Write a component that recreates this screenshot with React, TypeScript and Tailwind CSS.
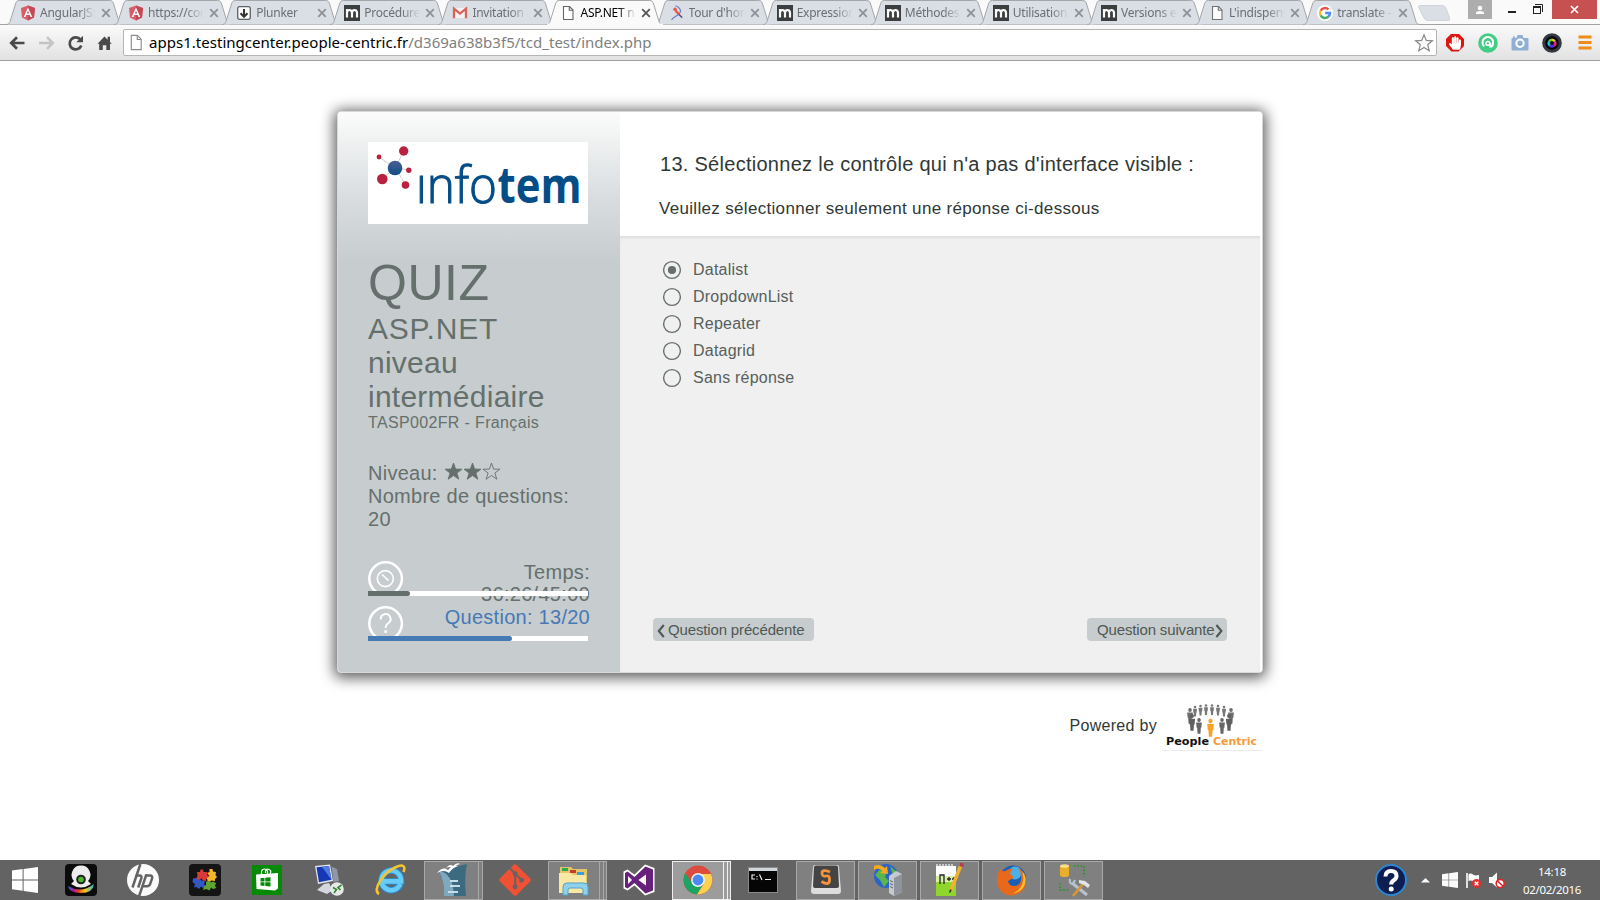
import React from "react";
import { FaHandPaper, FaGitAlt } from "react-icons/fa";

const SEGOE = "font-['Noto_Sans',sans-serif]";

/* ---------- browser chrome ---------- */

function AngularIcon() {
  return (
    <svg viewBox="0 0 16 16" className="h-4 w-4">
      <path d="M8 0.5 15 3 14 12.4 8 15.6 2 12.4 1 3Z" fill="#d9505a" />
      <path d="M8 0.5 15 3 14 12.4 8 15.6Z" fill="#c03a48" />
      <path d="M8 2.4 12.3 12H10.5L9.7 9.9H6.3L5.5 12H3.7ZM8 5.6 6.9 8.4H9.1Z" fill="#fff" />
    </svg>
  );
}
function PlunkIcon() {
  return (
    <svg viewBox="0 0 16 16" className="h-4 w-4">
      <rect x="1.7" y="1.7" width="12.6" height="12.6" rx="2" fill="#fff" stroke="#555" strokeWidth="1.3" />
      <path d="M8 4V11.5M4.5 8.2 8 11.8 11.5 8.2" stroke="#222" strokeWidth="2" fill="none" />
    </svg>
  );
}
function MIcon() {
  return (
    <svg viewBox="0 0 16 16" className="h-4 w-4">
      <rect width="16" height="16" fill="#2c2c2c" />
      <path d="M3 12.5V4M3 12.5V7.5Q3.3 5 5.4 5T8 7.5V12.5M8 7.5Q8.4 5 10.5 5T13 7.5V12.5" stroke="#fff" strokeWidth="2.2" fill="none" />
    </svg>
  );
}
function GmailIcon() {
  return (
    <svg viewBox="0 0 16 16" className="h-4 w-4">
      <rect x="2" y="3" width="12" height="10" fill="#f4f4f4" />
      <path d="M2 13.2V3.6L8 8.6 14 3.6V13.2" fill="none" stroke="#d9564a" strokeWidth="2.3" />
    </svg>
  );
}
function PageIcon() {
  return (
    <svg viewBox="0 0 16 16" className="h-4 w-4">
      <path d="M3.5 1.5H9.5L13 5V14.5H3.5Z" fill="#fff" stroke="#666" strokeWidth="1.1" />
      <path d="M9.3 1.5V5.3H13" fill="none" stroke="#666" strokeWidth="1.1" />
    </svg>
  );
}
function TourIcon() {
  return (
    <svg viewBox="0 0 16 16" className="h-4 w-4">
      <path d="M6.5 0.8C11 2 13 6 10 9S4.5 11.5 2.5 15" fill="none" stroke="#5a68b8" strokeWidth="1.1" />
      <path d="M9 8.5 13.2 12.6" stroke="#3f4a90" strokeWidth="1.5" />
      <circle cx="6" cy="4.2" r="1.7" fill="#e8473e" />
      <path d="M6.5 5.5 10 9.5" stroke="#e8473e" strokeWidth="2.4" />
    </svg>
  );
}
function GoogleIcon() {
  return (
    <svg viewBox="0 0 16 16" className="h-4 w-4">
      <circle cx="8" cy="8" r="8" fill="#fff" />
      <g fill="none" strokeWidth="2.4">
        <path d="M11.5 4.4A5 5 0 0 0 3.6 5.7" stroke="#ea4335" />
        <path d="M3.6 5.7A5 5 0 0 0 3.6 10.4" stroke="#fbbc05" />
        <path d="M3.6 10.4A5 5 0 0 0 11.4 11.7" stroke="#34a853" />
        <path d="M11.4 11.7A5 5 0 0 0 13 8H8.2" stroke="#4285f4" />
      </g>
    </svg>
  );
}

type TabInfo = { title: string; icon: React.ReactNode; active?: boolean };
const TABS: TabInfo[] = [
  { title: "AngularJS:", icon: <AngularIcon /> },
  { title: "https://cod", icon: <AngularIcon /> },
  { title: "Plunker", icon: <PlunkIcon /> },
  { title: "Procédure", icon: <MIcon /> },
  { title: "Invitation à", icon: <GmailIcon /> },
  { title: "ASP.NET ni", icon: <PageIcon />, active: true },
  { title: "Tour d'hori", icon: <TourIcon /> },
  { title: "Expression", icon: <MIcon /> },
  { title: "Méthodes", icon: <MIcon /> },
  { title: "Utilisation", icon: <MIcon /> },
  { title: "Versions et", icon: <MIcon /> },
  { title: "L'indispens", icon: <PageIcon /> },
  { title: "translate - ", icon: <GoogleIcon /> },
];

function Tab({ title, icon, active }: TabInfo) {
  return (
    <div className={active ? "relative z-10 h-[25px] w-[108.1px] shrink-0" : "relative h-[25px] w-[108.1px] shrink-0"}>
      <svg viewBox="0 0 120 25" className="absolute top-0 left-0 h-[25px] w-[120px]">
        <path
          d="M0 24.5C3 24.5 3.5 23 4 21.5L9.5 4C10.3 1.5 11 0.5 13.5 0.5H103.5C106 0.5 106.8 1.5 107.6 4L113 21.5C113.6 23 114 24.5 117 24.5"
          fill={active ? "#fafafa" : "#dadfe6"}
          stroke="#a4a6a9"
        />
        {active && <rect x="1" y="23.5" width="116" height="2" fill="#fafafa" />}
      </svg>
      <div className="relative flex h-[25px] items-center pl-[14px]">
        <span className={active ? "" : "opacity-90"}>{icon}</span>
        <span
          className={
            (active ? "text-black " : "text-[#6b6e72] ") +
            "ml-[4px] w-[56px] overflow-hidden text-[12px] tracking-[-0.25px] whitespace-nowrap [mask-image:linear-gradient(to_right,#000_68%,transparent)]"
          }
        >
          {title}
        </span>
        <svg viewBox="0 0 10 10" className="ml-[5px] h-[10px] w-[10px]">
          <path d="M1.2 1.2 8.8 8.8M8.8 1.2 1.2 8.8" stroke={active ? "#555" : "#8f9296"} strokeWidth="1.8" />
        </svg>
      </div>
    </div>
  );
}

function TabStrip() {
  return (
    <div className="flex h-[25px] items-start border-b border-[#a0a2a5] bg-[#fafafa] pl-[6px]">
      <div className="flex">
        {TABS.map((t, i) => (
          <Tab key={i} {...t} />
        ))}
      </div>
      <svg viewBox="0 0 36 18" className="mt-[4px] ml-[6px] h-[18px] w-[36px]">
        <path d="M3 1.5H25Q28 1.5 29 4L32.5 14Q33.4 16.5 31 16.5H11Q8 16.5 7 14L2 4Q1 1.5 3 1.5Z" fill="#dadfe6" stroke="#d0d4da" />
      </svg>
      <div className="ml-auto flex h-[19px] items-stretch pr-[3px]">
        <div className="flex w-[24px] items-center justify-center bg-[#adadad]">
          <svg viewBox="0 0 10 10" className="h-[10px] w-[10px]">
            <circle cx="5" cy="3" r="2.2" fill="#fff" />
            <path d="M1 9V7.6Q1.5 6 5 6T9 7.6V9Z" fill="#fff" />
          </svg>
        </div>
        <div className="flex w-[60px] items-center">
          <svg viewBox="0 0 60 19" className="h-[19px] w-[60px]">
            <rect x="16" y="11" width="8" height="2" fill="#222" />
            <path d="M43 4.5H50.5V12" fill="none" stroke="#222" />
            <path d="M41 6H49V14H41ZM42 8V13H48V8Z" fill="#222" fillRule="evenodd" />
          </svg>
        </div>
        <div className="flex w-[45px] items-center justify-center bg-[#c75050]">
          <svg viewBox="0 0 9 9" className="h-[9px] w-[9px]">
            <path d="M1 1 8 8M8 1 1 8" stroke="#fff" strokeWidth="1.7" />
          </svg>
        </div>
      </div>
    </div>
  );
}

function Toolbar() {
  return (
    <div className="flex h-[36px] items-center border-b border-[#a0a0a0] bg-gradient-to-b from-[#fafafa] to-[#e2e2e2] pl-[8px]">
      <svg viewBox="0 0 110 20" className="h-[20px] w-[110px]">
        <path d="M16.5 10H4M9 4.2 3.2 10 9 15.8" fill="none" stroke="#4a4a4a" strokeWidth="2.7" />
        <path d="M31 10H44M39 4.2 44.8 10 39 15.8" fill="none" stroke="#c4c4c4" strokeWidth="2.5" />
        <path d="M72.5 6.8A6 6 0 1 0 73.3 12.5" fill="none" stroke="#4a4a4a" strokeWidth="2.7" />
        <path d="M75 2.8V9.2H68.3Z" fill="#4a4a4a" />
        <path d="M89.5 10.8 96.5 3.6 99.6 6.8V3.8H102V9L103.8 10.8H102V17H98.3V12.2H94.8V17H91.2V10.8Z" fill="#4a4a4a" />
      </svg>
      <div className="ml-[5px] flex h-[27px] w-[1314px] items-center rounded-[2px] border border-[#b5b5b5] bg-white pl-[4px]">
        <svg viewBox="0 0 16 18" className="h-[17px] w-[16px]">
          <path d="M3 1.5H9.5L13.5 5.5V16.5H3Z" fill="#fff" stroke="#8c8c8c" strokeWidth="1.2" />
          <path d="M9.3 1.5V5.8H13.5" fill="none" stroke="#8c8c8c" strokeWidth="1.2" />
        </svg>
        <span className="ml-[5px] text-[15px] tracking-[0.025px] whitespace-nowrap text-black">
          apps1.testingcenter.people-centric.fr<span className="text-[#808080]">/d369a638b3f5/tcd_test/index.php</span>
        </span>
        <svg viewBox="0 0 20 20" className="mr-[2px] ml-auto h-[20px] w-[20px]">
          <path d="M10 1.8 12.3 7.4 18.4 7.8 13.7 11.7 15.2 17.7 10 14.4 4.8 17.7 6.3 11.7 1.6 7.8 7.7 7.4Z" fill="#fff" stroke="#8a8a8a" strokeWidth="1.2" />
        </svg>
      </div>
      <div className="ml-[9px] flex items-center">
        <span className="flex h-[18px] w-[18px] items-center justify-center bg-[#e0150f] [clip-path:polygon(30%_0,70%_0,100%_30%,100%_70%,70%_100%,30%_100%,0_70%,0_30%)]">
          <FaHandPaper className="h-[14px] w-[12px] text-white" />
        </span>
        <svg viewBox="0 0 20 20" className="ml-[14px] h-[20px] w-[20px]">
          <circle cx="10" cy="10" r="9.8" fill="#42cd84" />
          <path d="M6.2 13.2A5.3 5.3 0 1 1 15 10.5Q15 13.2 12.6 14.2M12.4 14.6V9.8" fill="none" stroke="#fff" strokeWidth="1.9" />
          <circle cx="9.9" cy="10.4" r="1.9" fill="none" stroke="#fff" strokeWidth="1.5" />
        </svg>
        <svg viewBox="0 0 18 18" className="ml-[13px] h-[18px] w-[18px]">
          <path d="M1.5 4H2V2.5H4V4H5.5L6.5 1H11.5L12.5 4H16.5Q17.5 4 17.5 5V15Q17.5 16.5 16.5 16.5H1.5Q0.5 16.5 0.5 15V5Q0.5 4 1.5 4Z" fill="#8fb0d3" />
          <circle cx="9" cy="9.3" r="3.7" fill="#8fb0d3" stroke="#fff" strokeWidth="2" />
        </svg>
        <svg viewBox="0 0 20 20" className="ml-[13px] h-[20px] w-[20px]">
          <circle cx="10" cy="10" r="9.8" fill="#34383f" />
          <circle cx="10" cy="10" r="6.8" fill="#050505" />
          <path d="M10 10 6 8A4.5 4.5 0 0 1 10 5.5Z" fill="#5fd52c" />
          <path d="M10 10V5.5A4.5 4.5 0 0 1 14 8Z" fill="#e6c91e" />
          <path d="M10 10 14 8A4.5 4.5 0 0 1 12.5 13.8Z" fill="#e0258c" />
          <path d="M10 10 12.5 13.8A4.5 4.5 0 0 1 7 13.4Z" fill="#5a2be0" />
          <path d="M10 10 7 13.4A4.5 4.5 0 0 1 6 8Z" fill="#1ec0d8" />
          <circle cx="10" cy="10" r="2" fill="#111" />
        </svg>
        <svg viewBox="0 0 14 15" className="ml-[16px] h-[15px] w-[14px]">
          <path d="M0.5 2H13.5M0.5 7.5H13.5M0.5 13H13.5" stroke="#ee8c15" strokeWidth="3" />
        </svg>
      </div>
    </div>
  );
}

/* ---------- quiz ---------- */

function InfotemLogo() {
  return (
    <svg viewBox="0 0 220 82" className="block h-[82px] w-[220px] bg-white">
      <defs>
        <linearGradient id="ball" x1="0" y1="0" x2="0" y2="1">
          <stop offset="0" stopColor="#4c5f93" />
          <stop offset="1" stopColor="#0d4b87" />
        </linearGradient>
      </defs>
      <path d="M27 26 36 9M27 26 11 15M27 26 14 37M27 26 38 43M27 26 41 28" stroke="#cfcfcf" strokeWidth="1" />
      <circle cx="27" cy="26" r="7.3" fill="url(#ball)" />
      <g fill="#b9213f">
        <circle cx="35.7" cy="9" r="4.7" />
        <circle cx="11" cy="15" r="2.4" />
        <circle cx="14.3" cy="37" r="5.3" />
        <circle cx="37.5" cy="43" r="3.8" />
        <circle cx="40.8" cy="28.3" r="2.7" />
      </g>
      <g fill="#044d86" fontFamily="'Open Sans', 'Noto Sans', sans-serif">
        <text x="48" y="61" fontSize="52" fontWeight="300" stroke="#044d86" strokeWidth="1.1" textLength="81" lengthAdjust="spacingAndGlyphs">
          ınfo
        </text>
        <text x="129.5" y="61" fontSize="50" fontWeight="700" textLength="84" lengthAdjust="spacingAndGlyphs">
          tem
        </text>
      </g>
    </svg>
  );
}

function Star({ filled }: { filled: boolean }) {
  return (
    <svg viewBox="0 0 19 19" className="h-[19px] w-[19px]">
      <path
        d="M9.5 1 11.6 7.1 18 7.2 12.9 11 14.8 17.2 9.5 13.5 4.2 17.2 6.1 11 1 7.2 7.4 7.1Z"
        fill={filled ? "#65706c" : "none"}
        stroke="#65706c"
        strokeWidth="0.9"
      />
    </svg>
  );
}

function Sidebar() {
  return (
    <div className="flex w-[282px] shrink-0 flex-col bg-[linear-gradient(to_bottom,#fbfbfb_0px,#eff1f1_30px,#d9dde0_85px,#c7ccce_150px,#c7ccce_100%)] pt-[30px] pr-[32px] pl-[30px] text-[#65706c]">
      <InfotemLogo />
      <div className="mt-[31px] text-[50px] leading-[56px] tracking-[0.5px]">QUIZ</div>
      <div className="mt-[1px] text-[30px] leading-[34px] tracking-[0.25px]">
        <span className="tracking-[0.8px]">ASP.NET</span>
        <br />
        niveau
        <br />
        intermédiaire
      </div>
      <div className="text-[16px] leading-[18px] tracking-[0.35px]">TASP002FR - Français</div>
      <div className="mt-[30px] flex h-[22.5px] items-center text-[20px] leading-[22.5px] tracking-[0.25px] whitespace-nowrap">
        Niveau:
        <span className="mb-[3px] ml-[6px] flex">
          <Star filled />
          <Star filled />
          <Star filled={false} />
        </span>
      </div>
      <div className="text-[20px] leading-[23px] tracking-[0.27px]">
        Nombre de questions:
        <br />
        20
      </div>
      <div className="relative mt-[30px] h-[45px] w-[221px] text-right text-[20px] leading-[22.5px] tracking-[0.3px]">
        <svg viewBox="0 0 36 36" className="absolute top-0 left-0 h-[36px] w-[36px]">
          <circle cx="17.6" cy="17.6" r="16.3" fill="none" stroke="#fff" strokeWidth="2.6" />
          <circle cx="17.3" cy="17.6" r="8" fill="none" stroke="#fff" strokeWidth="1.6" />
          <path d="M14 13.5 20.5 19.5" stroke="#fff" strokeWidth="1.7" />
        </svg>
        <span className="mr-[-1px]">Temps:</span>
        <br />
        <span className="mr-[-1px]">36:26/45:00</span>
        <div className="absolute top-[30px] left-0 h-[5px] w-[220px] bg-white">
          <div className="h-[5px] w-[42px] rounded-r-[3px] bg-[#65706c]" />
        </div>
        <div className="absolute top-[35px] left-0 h-[3px] w-[40px] bg-[#c7ccce]" />
      </div>
      <div className="relative h-[45px] w-[221px] text-right text-[20px] leading-[22.5px] tracking-[0.27px] text-[#467ab5]">
        <svg viewBox="0 0 36 36" className="absolute top-0 left-0 h-[36px] w-[36px]">
          <circle cx="17.6" cy="17.6" r="16.3" fill="none" stroke="#fff" strokeWidth="2.6" />
          <path d="M12.8 13.5A4.9 4.9 0 1 1 20.5 17Q17.6 18.8 17.6 22" fill="none" stroke="#fff" strokeWidth="1.9" />
          <circle cx="17.6" cy="25.6" r="1.5" fill="#fff" />
        </svg>
        <span className="mr-[-1px]">Question: 13/20</span>
        <div className="absolute top-[30px] left-0 h-[5px] w-[220px] bg-white">
          <div className="h-[5px] w-[144px] rounded-r-[3px] bg-[#467ab5]" />
        </div>
        <div className="absolute top-[35px] left-0 h-[3px] w-[40px] bg-[#c7ccce]" />
      </div>
    </div>
  );
}

const OPTIONS = ["Datalist", "DropdownList", "Repeater", "Datagrid", "Sans réponse"];

function Option({ label, selected }: { label: string; selected: boolean }) {
  return (
    <div className="flex h-[27px] items-center">
      <svg viewBox="0 0 20 20" className="h-[20px] w-[20px]">
        <circle cx="10" cy="10" r="8.4" fill="none" stroke="#65706c" strokeWidth="1.4" />
        {selected && <circle cx="10" cy="10" r="4.1" fill="#65706c" />}
      </svg>
      <span className="ml-[11px] text-[16px] tracking-[0.22px] text-[#575f5c]">{label}</span>
    </div>
  );
}

function Chevron({ right }: { right?: boolean }) {
  return (
    <svg viewBox="0 0 8 14" className="mt-[3px] h-[14px] w-[8px] shrink-0">
      <path d={right ? "M1.4 1 6.4 7 1.4 13" : "M6.8 1 1.8 7 6.8 13"} fill="none" stroke="#4f5855" strokeWidth="2.1" />
    </svg>
  );
}

function Question() {
  return (
    <div className="flex flex-1 flex-col bg-white pr-[2px]">
      <div className="h-[124px] pl-[39px] text-[#2f3836]">
        <div className="pt-[40px] pl-[1px] text-[20px] leading-[24px] tracking-[0.28px] whitespace-nowrap">
          13. Sélectionnez le contrôle qui n'a pas d'interface visible :
        </div>
        <div className="mt-[23px] text-[17px] leading-[20px] tracking-[0.32px] whitespace-nowrap">
          Veuillez sélectionner seulement une réponse ci-dessous
        </div>
      </div>
      <div className="flex flex-1 flex-col bg-[#f0f0f0] shadow-[inset_0_3px_3px_-1px_#dedede]">
        <div className="pt-[20px] pl-[42px]">
          {OPTIONS.map((o, i) => (
            <Option key={o} label={o} selected={i === 0} />
          ))}
        </div>
        <div className="mt-auto mb-[31px] flex justify-between pr-[33px] pl-[33px] text-[15px] tracking-[-0.15px] text-[#4f5855]">
          <button className="flex h-[23px] w-[161px] items-center rounded-[4px] bg-[#c7ccce] pl-[4px] whitespace-nowrap">
            <Chevron />
            <span className="mt-[1px] ml-[3px]">Question précédente</span>
          </button>
          <button className="flex h-[23px] w-[140px] items-center rounded-[4px] bg-[#c7ccce] pl-[10px] whitespace-nowrap">
            <span className="mt-[1px]">Question suivante</span>
            <Chevron right />
          </button>
        </div>
      </div>
    </div>
  );
}

function PersonShape({ x, y, s, c }: { x: number; y: number; s: number; c: string }) {
  return (
    <g fill={c}>
      <ellipse cx={x} cy={y} rx={s * 0.14} ry={s * 0.15} />
      <path d={`M${x - s * 0.22} ${y + s * 0.2}h${s * 0.44}l${-s * 0.04} ${s * 0.4}h${-s * 0.04}l${-s * 0.03} ${s * 0.45}h${-s * 0.22}l${-s * 0.03} ${-s * 0.45}h${-s * 0.04}z`} />
    </g>
  );
}

function PeopleCentricLogo() {
  return (
    <svg viewBox="0 0 100 50" className="h-[50px] w-[100px]">
      <PersonShape x={28} y={8} s={13} c="#6d6d6d" />
      <PersonShape x={69} y={8} s={13} c="#6d6d6d" />
      <PersonShape x={30} y={14} s={14} c="#606060" />
      <PersonShape x={67} y={14} s={14} c="#606060" />
      <PersonShape x={33} y={5} s={9} c="#777" />
      <PersonShape x={38.5} y={4} s={9} c="#777" />
      <PersonShape x={44} y={3.5} s={9} c="#777" />
      <PersonShape x={50} y={3.5} s={9} c="#777" />
      <PersonShape x={56} y={4} s={9} c="#777" />
      <PersonShape x={62} y={5} s={9} c="#777" />
      <PersonShape x={37} y={18} s={13} c="#666" />
      <PersonShape x={60} y={18} s={13} c="#666" />
      <PersonShape x={48.5} y={19} s={15} c="#fba02a" />
      <g fontFamily="'DejaVu Sans', sans-serif" fontSize="10.5" fontWeight="700">
        <text x="4" y="42.5" fill="#111" textLength="43" lengthAdjust="spacingAndGlyphs">People</text>
        <text x="51" y="42.5" fill="#f89a3a" textLength="44" lengthAdjust="spacingAndGlyphs">Centric</text>
      </g>
      <rect x="0" y="48" width="100" height="1" fill="#ebebeb" />
    </svg>
  );
}

/* ---------- taskbar ---------- */

function WinLogo({ className }: { className: string }) {
  return (
    <svg viewBox="0 0 26 26" className={className}>
      <path d="M0 3.6 10.6 2.1V12.4H0ZM11.6 2 26 0V12.4H11.6ZM0 13.5H10.6V23.8L0 22.3ZM11.6 13.5H26V26L11.6 24Z" fill="#fff" />
    </svg>
  );
}

function WebcamIcon() {
  return (
    <svg viewBox="0 0 32 32" className="h-8 w-8">
      <defs>
        <linearGradient id="rainbow">
          <stop offset="0" stopColor="#2a6be0" />
          <stop offset="0.2" stopColor="#a51ca0" />
          <stop offset="0.4" stopColor="#f03a20" />
          <stop offset="0.65" stopColor="#f8c81a" />
          <stop offset="1" stopColor="#29b6d8" />
        </linearGradient>
      </defs>
      <rect width="32" height="32" rx="4" fill="#0b0b0b" />
      <path d="M3 22Q16 30 29 20Q28 29 16 29T3 22Z" fill="url(#rainbow)" />
      <path d="M16 1.5A9.3 9.3 0 0 1 23 17L26 20Q16 27 6 20L9 17A9.3 9.3 0 0 1 16 1.5Z" fill="#ececec" />
      <circle cx="16" cy="15.5" r="4.8" fill="#222" />
      <circle cx="16" cy="15.5" r="2.8" fill="#48b82e" />
    </svg>
  );
}
function HpIcon() {
  return (
    <svg viewBox="0 0 32 32" className="h-8 w-8">
      <circle cx="16" cy="16" r="16" fill="#fafafa" />
      <g fill="none" stroke="#636363" strokeWidth="2.5">
        <path d="M13.4 0 5.5 23.5" />
        <path d="M8.6 11.6H12.4Q15.2 11.6 14.3 14.4L11.2 23.5" />
        <path d="M19.4 10.4 12 32.5" />
        <path d="M18.8 11.6H23Q26 11.6 25 14.6L23.2 19.9Q22.4 22.2 20 22.2H15.6" />
      </g>
    </svg>
  );
}
function PuzzleIcon() {
  return (
    <svg viewBox="0 0 32 32" className="h-8 w-8">
      <rect width="32" height="32" rx="4" fill="#141414" />
      <path d="M8 8 11 8 11.5 5.5 14 5.5 14.5 8 18 8 18 11 20 12 19 15 17 15 17 17 13.5 16.5 13 14.5 11 15 10 17 7 15 8.5 12Z" fill="#d83a3a" />
      <path d="M18 9 20.5 8 20.5 5 23.5 5 24 7.5 27 8 26.5 11 28 13 26 15 26 17 22 16.5 21 18 18.5 17 18 14 20.5 12Z" fill="#f2b72b" />
      <path d="M4 14.5 7 14 9 16 11 15 13 17 16 17 15 20 16.5 22 14 24 12 22.5 10 25 7.5 23 5 23.5 6 20 3.5 18Z" fill="#3158c4" />
      <path d="M17 17.5 20 17 22 18.5 24 17.5 27 19 26 22 27.5 24 24 25 22 23.5 20.5 26.5 17.5 25 14 26 15 22.5 17 21Z" fill="#5fa52f" />
    </svg>
  );
}
function StoreIcon() {
  return (
    <svg viewBox="0 0 30 30" className="h-[30px] w-[30px]">
      <rect width="30" height="30" fill="#048a04" />
      <path d="M9.5 10V6.5Q10 4 12.5 4T15.5 6.5V10M13.5 8V5.5Q14.5 3.5 17 4.5T18.5 7V10" fill="none" stroke="#fff" strokeWidth="1.2" />
      <path d="M4 9.5 26 8V23.5L23 25.5 4.5 24Z" fill="#fff" />
      <path d="M8.5 13.2 12.5 12.8V16.5H8.5ZM13.3 12.7 18.5 12.2V16.5H13.3ZM8.5 17.3H12.5V21L8.5 20.6ZM13.3 17.3H18.5V21.6L13.3 21.1Z" fill="#048a04" />
    </svg>
  );
}
function RdpIcon() {
  return (
    <svg viewBox="0 0 32 32" className="h-8 w-8">
      <path d="M2 2 17 0.5 20 17 5 20Z" fill="#e2e6ee" />
      <path d="M3.5 3.2 16 2 18.5 15.8 6 18.3Z" fill="#1738b4" />
      <path d="M9 3 16 2 18.5 15.8Z" fill="#4f7ae2" />
      <path d="M11 20 16 19 18 23 23 24 14 30 4 26Z" fill="#d3d7de" />
      <path d="M18.5 2.5 24 5 26 17 20.5 18Z" fill="#8e97a8" />
      <circle cx="24" cy="25" r="6.8" fill="#e8e8e8" />
      <path d="M20 23.5 23.5 25.5 21 29M28.5 21 25 23.5 27.5 26" fill="none" stroke="#2d8a2d" strokeWidth="1.6" />
    </svg>
  );
}
function IeIcon() {
  return (
    <svg viewBox="0 0 32 32" className="h-8 w-8">
      <path d="M25.3 20A9.8 9.8 0 1 1 26 16.2V17.4H8" fill="none" stroke="#2a93dc" strokeWidth="6.4" />
      <path d="M25.3 20A9.8 9.8 0 1 1 26 16.2V17.4H8" fill="none" stroke="#67ccf6" strokeWidth="4.6" />
      <path d="M4 30C-3 26 8 9 20 3.5 28-0.5 31 2 28.5 8" fill="none" stroke="#f4c531" strokeWidth="2.6" />
    </svg>
  );
}
function WriterIcon() {
  return (
    <svg viewBox="0 0 32 34" className="h-[34px] w-8">
      <path d="M3 8Q14 5 31 1Q28 14 30 33H8Q9 20 3 8Z" fill="#3c6a80" />
      <path d="M3 8Q17 10 18 33H8Q9 20 3 8Z" fill="#7fa9bf" />
      <path d="M14 18H22M14 23H24M12 29H22" stroke="#c7dde8" strokeWidth="2" />
      <path d="M1 10Q7 3 12 7Q17 1 22 3Q16 5 13 10Q8 6 1 10ZM10 5Q14 0 17 3Q21-1 24 1Q19 2 17 5Q14 3 10 5Z" fill="#fff" />
    </svg>
  );
}
function ExplorerIcon() {
  return (
    <svg viewBox="0 0 34 32" className="h-8 w-[34px]">
      <path d="M3 3H14L16 5H30V28H3Z" fill="#e3c469" />
      <path d="M5 4H11V7H5Z" fill="#2da84a" />
      <path d="M13 6H19V9H13Z" fill="#c83a2a" />
      <path d="M20 8H27V11H20Z" fill="#3d9cdb" />
      <path d="M2 9 14 9 16 11H29V29H2Z" fill="#f8e8a4" />
      <path d="M6 31V23Q6 19 10 19H27Q31 19 31 23V31H26V26Q26 24 24 24H13Q11 24 11 26V31Z" fill="#8fd0ea" stroke="#4ea3cc" />
    </svg>
  );
}
function VsIcon() {
  return (
    <svg viewBox="0 0 32 32" className="h-8 w-8">
      <path d="M22 0.5 31.5 4V28L22 31.5 11.5 21.5 4.5 26.5 0.5 24.5V7.5L4.5 5.5 11.5 10.5Z" fill="#fff" />
      <path d="M22.5 2.5 30 5.5V26.5L22.5 29.5 11.5 19 4.5 24.5 2 23V9L4.5 7.5 11.5 13Z" fill="#68217a" />
      <path d="M23 10.5V21.5L15.5 16ZM5 12V20L9 16Z" fill="#fff" />
    </svg>
  );
}
function ChromeIcon() {
  return (
    <svg viewBox="0 0 30 30" className="h-[30px] w-[30px]">
      <circle cx="15" cy="15" r="14.5" fill="#dd4b3e" />
      <path d="M2.3 8A14.5 14.5 0 0 0 14 29.5L20.5 18.5 9.5 18.5Z" fill="#1da362" />
      <path d="M28 9H15L21 18.5 14 29.5A14.5 14.5 0 0 0 28 9Z" fill="#fdd04e" />
      <circle cx="15" cy="15" r="6.9" fill="#f4f4f4" />
      <circle cx="15" cy="15" r="5.4" fill="#4a8af4" />
    </svg>
  );
}
function CmdIcon() {
  return (
    <svg viewBox="0 0 30 26" className="h-[26px] w-[30px]">
      <rect x="0.5" y="0.5" width="29" height="25" fill="#050505" stroke="#8a8a8a" />
      <rect x="1" y="1" width="28" height="3" fill="#cfd6dc" />
      <path d="M7 8H4V12H7M9 9V9.9M9 11.5V12.4M11.5 7.5 14 13M17 12.5H23" fill="none" stroke="#eee" strokeWidth="1.2" />
    </svg>
  );
}
function SublimeIcon() {
  return (
    <svg viewBox="0 0 32 32" className="h-8 w-8">
      <path d="M3 3Q3 1 5 1H27Q29 1 29 3L31 27Q31 30 28 30H4Q1 30 1 27Z" fill="#ddd" />
      <path d="M4 3Q4 1.5 6 1.5H26Q28 1.5 28 3L29 22Q29 24 27 24H5Q3 24 3 22Z" fill="#444" />
      <path d="M20 8Q12 5 12 9T16 12 19.5 16.5 11.5 17.5" fill="none" stroke="#f3933b" strokeWidth="2.8" />
    </svg>
  );
}
function GlobeServerIcon() {
  return (
    <svg viewBox="0 0 32 34" className="h-[34px] w-8">
      <circle cx="14" cy="13" r="12" fill="#2c62cc" />
      <path d="M8 6 15 8 13 14 17 18 12 24 8 17 3 12ZM18 3 25 9 21 12Z" fill="#5ab54a" />
      <path d="M2 3Q8 0 13 5L15 3 16 11 8 10 10.5 8Q7 4 2 7Z" fill="#f7a81f" />
      <path d="M17 13 24 8 30 11V29L22 33 17 30Z" fill="#c6cacf" />
      <path d="M22 15 30 11V29L22 33Z" fill="#8d949b" />
      <path d="M18 17.5 21 19M18 20.5 21 22M18 23.5 21 25" stroke="#666" />
    </svg>
  );
}
function NotepadIcon() {
  return (
    <svg viewBox="0 0 32 34" className="h-[34px] w-8">
      <path d="M2 3H22V33H2Z" fill="#fdfdfd" />
      <path d="M2 17H22V33H2Z" fill="#8fd52c" />
      <path d="M2 13H22V19H2Z" fill="#d5f0a4" />
      <path d="M3 3V1M6 3V1M9 3V1M12 3V1M15 3V1M18 3V1" stroke="#ddd" strokeWidth="1.6" />
      <path d="M6 21V12H10V21M13 16H17M15 14V18M18 16H22M20 14V18" fill="none" stroke="#222" strokeWidth="1.3" />
      <path d="M27 2 17 27" stroke="#f0b32e" strokeWidth="3.4" />
      <path d="M28.2 0 27 3.6" stroke="#b0404a" strokeWidth="4" />
      <path d="M17 26.5 15.6 29.5" stroke="#333" strokeWidth="1.6" />
    </svg>
  );
}
function FirefoxIcon() {
  return (
    <svg viewBox="0 0 32 32" className="h-8 w-8">
      <circle cx="17" cy="14.5" r="13" fill="#1b5fb4" />
      <circle cx="19" cy="9" r="6.5" fill="#4bb0e8" />
      <path d="M4 5Q6 8 9 7Q14 4 17 5Q13 8 15 11Q18 12 17 14L12 17Q13 22 18 22Q24 22 25 16Q26 9 22 3Q30 9 30 17A14.5 14.5 0 0 1 1 17Q1 10 4 5Z" fill="#e8681c" />
      <path d="M29.5 14Q30 27 17 29.5Q26 25 27 17Q28 12 26 7Q29 10 29.5 14Z" fill="#f9c22e" />
    </svg>
  );
}
function ToolsIcon() {
  return (
    <svg viewBox="0 0 32 34" className="h-[34px] w-8">
      <path d="M2 3V12Q2 14 6.5 14T11 12V3Z" fill="#e9ae2a" />
      <ellipse cx="6.5" cy="3" rx="4.5" ry="1.8" fill="#fbe08a" />
      <path d="M16 3H26V14M2 20V27H12" fill="none" stroke="#1c9a1c" strokeWidth="1.6" strokeDasharray="1.6 1.8" />
      <path d="M14 20 29 32" stroke="#b7c2cf" strokeWidth="3" />
      <path d="M12 16Q11 21 15 21L17 17" fill="none" stroke="#b7c2cf" strokeWidth="2.2" />
      <path d="M15 33 25 21" stroke="#d8962f" strokeWidth="2.6" />
      <path d="M21 17 27 18 32 22 30 25 26 22 21 20Z" fill="#dfe4ea" />
    </svg>
  );
}
function HelpIcon() {
  return (
    <svg viewBox="0 0 32 32" className="h-8 w-8">
      <circle cx="16" cy="16" r="15" fill="#0d1f52" stroke="#2f86d0" strokeWidth="2" />
      <path d="M10.5 12.5Q10.5 7 16 7T21.5 12Q21.5 14.5 18.8 16.2T16.2 20.5" fill="none" stroke="#fff" strokeWidth="4" />
      <circle cx="16.2" cy="25" r="2.5" fill="#fff" />
    </svg>
  );
}

type Slot = { icon: React.ReactNode; state?: "open" | "active"; stack?: number };
const SLOTS: Slot[] = [
  { icon: <WebcamIcon /> },
  { icon: <HpIcon /> },
  { icon: <PuzzleIcon /> },
  { icon: <StoreIcon /> },
  { icon: <RdpIcon /> },
  { icon: <IeIcon /> },
  { icon: <WriterIcon />, state: "open", stack: 1 },
  { icon: <FaGitAlt className="h-[36px] w-[36px] text-[#f05033]" /> },
  { icon: <ExplorerIcon />, state: "open", stack: 2 },
  { icon: <VsIcon /> },
  { icon: <ChromeIcon />, state: "active", stack: 2 },
  { icon: <CmdIcon /> },
  { icon: <SublimeIcon />, state: "open" },
  { icon: <GlobeServerIcon />, state: "open" },
  { icon: <NotepadIcon />, state: "open" },
  { icon: <FirefoxIcon />, state: "open" },
  { icon: <ToolsIcon />, state: "open" },
];

function TaskSlot({ icon, state, stack = 0 }: Slot) {
  if (!state) {
    return <div className="flex h-[40px] w-[62px] shrink-0 items-center justify-center">{icon}</div>;
  }
  const edge = state === "active" ? "border-[#f0f0f0] " : "border-[#a9a9a9] ";
  const face = state === "active" ? "bg-[#9c9c9c] " : "bg-[#808080] ";
  return (
    <div className="flex h-[40px] w-[62px] shrink-0 items-center pr-[1px] pl-[2px]">
      <div className={edge + face + "flex h-[39px] flex-1 items-center justify-center border"}>{icon}</div>
      {stack > 0 && <div className={edge + face + "h-[39px] w-[4px] border border-l-0"} />}
      {stack > 1 && <div className={edge + face + "h-[39px] w-[3px] border border-l-0"} />}
    </div>
  );
}

function Taskbar() {
  return (
    <div className="flex h-[40px] items-center bg-[#636363]">
      <div className="flex w-[50px] shrink-0 items-center pl-[12px]">
        <WinLogo className="h-[26px] w-[26px]" />
      </div>
      {SLOTS.map((s, i) => (
        <TaskSlot key={i} {...s} />
      ))}
      <div className="ml-auto flex items-center">
        <HelpIcon />
        <svg viewBox="0 0 9 5" className="ml-[14px] h-[5px] w-[9px]">
          <path d="M0 4.5 4.5 0 9 4.5Z" fill="#fff" />
        </svg>
        <WinLogo className="ml-[12px] h-[16px] w-[16px]" />
        <svg viewBox="0 0 18 18" className="ml-[7px] h-[18px] w-[18px]">
          <path d="M2 2V17" stroke="#fff" strokeWidth="1.6" />
          <path d="M3.5 3Q6 2 8 3.5T14 4V11Q11 12 8.5 10.5T3.5 10Z" fill="#fff" />
          <circle cx="11.5" cy="12.5" r="4.5" fill="#e03030" />
          <path d="M9.7 10.7 13.3 14.3M13.3 10.7 9.7 14.3" stroke="#fff" strokeWidth="1.3" />
        </svg>
        <svg viewBox="0 0 18 18" className="ml-[5px] h-[18px] w-[18px]">
          <path d="M1 6H4L9 1.5V16.5L4 12H1Z" fill="#fff" />
          <circle cx="12.2" cy="12.5" r="4" fill="#fff" stroke="#e02424" strokeWidth="1.6" />
          <path d="M9.4 9.8 15 15.3" stroke="#e02424" strokeWidth="1.6" />
        </svg>
        <div className="mr-[17px] ml-[15px] w-[62px] text-center text-[11.5px] leading-[17px] tracking-[-0.3px] whitespace-nowrap text-white">
          <div>14:18</div>
          <div className="pt-[1px]">02/02/2016</div>
        </div>
      </div>
    </div>
  );
}

export default function App() {
  return (
    <div className={SEGOE + " flex h-[900px] w-[1600px] flex-col overflow-hidden bg-white"}>
      <TabStrip />
      <Toolbar />
      <main className="flex flex-1 flex-col pt-[50px] pl-[337px] font-['Liberation_Sans',Arial,sans-serif]">
        <div className="flex h-[562px] w-[926px] overflow-hidden rounded-[4px] border border-[#d8d8d8] bg-white shadow-[0_2px_14px_3px_#606060]">
          <Sidebar />
          <Question />
        </div>
        <div className="mt-[29px] flex w-[925px] items-start justify-end">
          <span className="mt-[14px] mr-[5px] text-[16px] leading-[20px] tracking-[0.3px] text-[#2f3836]">Powered by</span>
          <PeopleCentricLogo />
        </div>
      </main>
      <Taskbar />
    </div>
  );
}
